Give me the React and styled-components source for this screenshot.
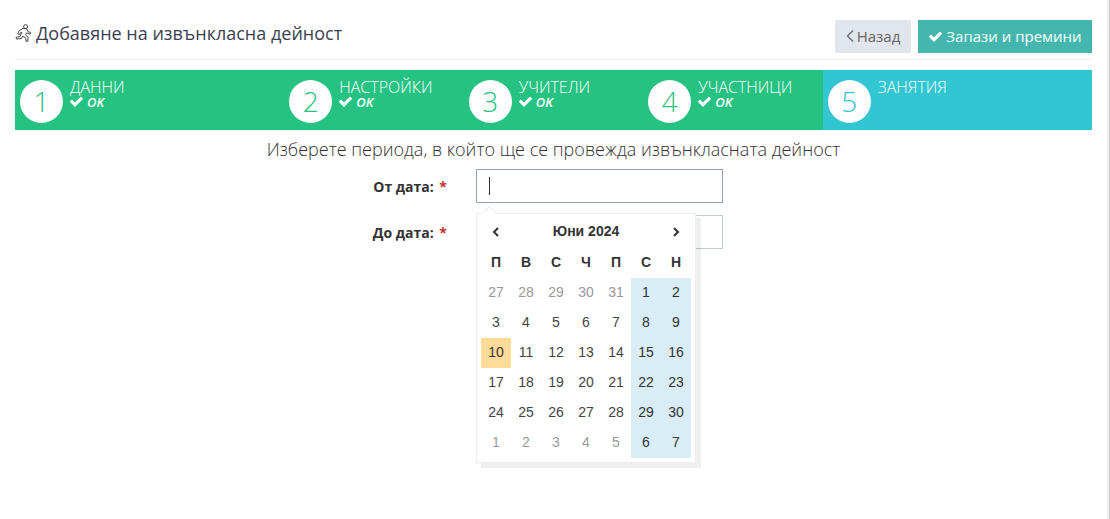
import React from "react";
import styled, { createGlobalStyle } from "styled-components";

const GlobalStyle = createGlobalStyle`
  html, body {
    margin: 0;
    padding: 0;
    background: #fff;
    font-family: "Open Sans", sans-serif;
    overflow: hidden;
  }
`;

const steps = [
  { num: 1, title: "ДАННИ", done: true, width: "25%" },
  { num: 2, title: "НАСТРОЙКИ", done: true, width: "16.6667%" },
  { num: 3, title: "УЧИТЕЛИ", done: true, width: "16.6667%" },
  { num: 4, title: "УЧАСТНИЦИ", done: true, width: "16.6667%" },
  { num: 5, title: "ЗАНЯТИЯ", done: false, width: "25%" },
];

const weekDays = ["П", "В", "С", "Ч", "П", "С", "Н"];

const days = [
  [27, 28, 29, 30, 31, 1, 2],
  [3, 4, 5, 6, 7, 8, 9],
  [10, 11, 12, 13, 14, 15, 16],
  [17, 18, 19, 20, 21, 22, 23],
  [24, 25, 26, 27, 28, 29, 30],
  [1, 2, 3, 4, 5, 6, 7],
];

const Check = ({ size = 13 }) => (
  <svg width={size} height={size} viewBox="0 0 1792 1792" fill="currentColor">
    <path d="M1671 566q0 40-28 68l-724 724-136 136q-28 28-68 28t-68-28l-136-136-362-362q-28-28-28-68t28-68l136-136q28-28 68-28t68 28l294 295 656-657q28-28 68-28t68 28l136 136q28 28 28 68z" />
  </svg>
);

const Runner = () => (
  <svg width="17" height="18" viewBox="0 0 17 18" fill="none" stroke="#4a4a4a" strokeWidth="1" strokeLinejoin="round" strokeLinecap="round">
    <circle cx="10.6" cy="2.6" r="2" />
    <path d="M4.5 6.5l3.2-2 4 .3 1.2 2.8 2.8 1-.6 1.6-3.6-1.3-1.1 2 2.7 2.2-.3 4.2h-1.8l-.3-3.2-3-2-1.3 2.5-5 .4-.3-1.7 3.8-.6 2-4.5-1.5.5-1 1.8-1.4-.7z" />
  </svg>
);

const Chevron = ({ dir }) => (
  <svg width="8" height="10" viewBox="0 0 8 10" fill="none" stroke="#333" strokeWidth="2">
    <path d={dir === "left" ? "M6 1L2 5l4 4" : "M2 1l4 4-4 4"} />
  </svg>
);

export default function App() {
  return (
    <Page>
      <GlobalStyle />
      <Header>
        <Title>
          <Runner />
          Добавяне на извънкласна дейност
        </Title>
        <Actions>
          <BackButton>
            <svg width="8" height="14" viewBox="0 0 8 14" fill="none" stroke="#6b6f7c" strokeWidth="1.4">
              <path d="M7 1.5L1.5 7 7 12.5" />
            </svg>
            Назад
          </BackButton>
          <SaveButton>
            <Check size={15} />
            Запази и премини
          </SaveButton>
        </Actions>
      </Header>

      <Wizard>
        {steps.map((s) => (
          <Step key={s.num} $done={s.done} $width={s.width}>
            <Circle $done={s.done}>{s.num}</Circle>
            <StepText>
              <StepTitle>{s.title}</StepTitle>
              {s.done && (
                <StepStatus>
                  <Check size={15} />
                  <em>OK</em>
                </StepStatus>
              )}
            </StepText>
          </Step>
        ))}
      </Wizard>

      <Lead>Изберете периода, в който ще се провежда извънкласната дейност</Lead>

      <Form>
        <FieldRow>
          <Label>
            От дата: <Req>*</Req>
          </Label>
          <DateInputWrap>
            <DateInput $focused>
              <Caret />
            </DateInput>
            <Picker>
              <Arrow />
              <PickerHead>
                <NavBtn>
                  <Chevron dir="left" />
                </NavBtn>
                <Month>Юни 2024</Month>
                <NavBtn>
                  <Chevron dir="right" />
                </NavBtn>
              </PickerHead>
              <DayGrid>
                {weekDays.map((d, i) => (
                  <WeekDay key={i}>{d}</WeekDay>
                ))}
                {days.flatMap((week, w) =>
                  week.map((d, i) => {
                    const outside = (w === 0 && i < 5) || (w === 5 && i < 5);
                    return (
                      <Day key={w + "-" + i} $weekend={i > 4} $outside={outside} $today={w === 2 && i === 0}>
                        {d}
                      </Day>
                    );
                  })
                )}
              </DayGrid>
            </Picker>
          </DateInputWrap>
        </FieldRow>
        <FieldRow>
          <Label>
            До дата: <Req>*</Req>
          </Label>
          <DateInput />
        </FieldRow>
      </Form>
      <Scroll />
    </Page>
  );
}

const Page = styled.div`
  height: 519px;
  padding: 20px 18px 0 15px;
  box-sizing: border-box;
  color: #333;
`;

const Header = styled.div`
  display: flex;
  justify-content: space-between;
  align-items: flex-start;
  height: 39px;
  border-bottom: 1px solid #eee;
`;

const Title = styled.h1`
  display: flex;
  align-items: center;
  gap: 4px;
  margin: 2px 0 0;
  font-size: 18px;
  font-weight: 400;
  line-height: 22px;
  color: #3a3f51;
`;

const Actions = styled.div`
  display: flex;
  gap: 7px;
`;

const BackButton = styled.button`
  display: flex;
  align-items: center;
  justify-content: center;
  gap: 3px;
  width: 76px;
  height: 33px;
  padding: 0 0 1px;
  border: 0;
  background: #e1e5ec;
  color: #666;
  font: 400 15px "Open Sans", sans-serif;
`;

const SaveButton = styled.button`
  display: flex;
  align-items: center;
  justify-content: center;
  gap: 3px;
  width: 174px;
  height: 33px;
  padding: 0 0 1px;
  border: 0;
  background: #44b6ae;
  color: #fff;
  font: 400 15px "Open Sans", sans-serif;
`;

const Wizard = styled.div`
  display: flex;
  margin-top: 10px;
  height: 60px;
`;

const Step = styled.div`
  display: flex;
  box-sizing: border-box;
  width: ${(p) => p.$width};
  padding: 10px 5px;
  gap: 7px;
  background: ${(p) => (p.$done ? "#26c281" : "#32c5d2")};
  color: #fff;
`;

const Circle = styled.div`
  display: flex;
  align-items: center;
  justify-content: center;
  box-sizing: border-box;
  flex: none;
  width: 43px;
  height: 43px;
  padding-bottom: 2px;
  border-radius: 50%;
  background: #fff;
  color: ${(p) => (p.$done ? "#26c281" : "#32c5d2")};
  font-size: 28px;
  font-weight: 300;
`;

const StepText = styled.div`
  display: flex;
  flex-direction: column;
`;

const StepTitle = styled.div`
  font-size: 16px;
  font-weight: 300;
  line-height: 16px;
  margin-top: -2px;
  padding-top: 1px;
`;

const StepStatus = styled.div`
  display: flex;
  align-items: center;
  gap: 3px;
  margin: -1px 0 0 -1px;
  font-size: 13px;
  font-weight: 600;
  line-height: 14px;
`;

const Lead = styled.div`
  margin-top: 7px;
  text-align: center;
  font-size: 18px;
  font-weight: 300;
  line-height: 24px;
  color: #333;
`;

const Form = styled.div`
  display: flex;
  flex-direction: column;
  gap: 12px;
  margin-top: 8px;
`;

const FieldRow = styled.div`
  display: flex;
  align-items: center;
  height: 34px;
`;

const Label = styled.label`
  box-sizing: border-box;
  width: 461px;
  padding: 1px 29px 0 0;
  text-align: right;
  font-size: 14px;
  font-weight: 700;
`;

const Req = styled.span`
  color: #c9302c;
  margin-left: 2px;
`;

const DateInputWrap = styled.div`
  position: relative;
`;

const DateInput = styled.div`
  box-sizing: border-box;
  display: flex;
  align-items: center;
  width: 247px;
  height: 34px;
  padding-left: 12px;
  background: #fff;
  border: 1px solid ${(p) => (p.$focused ? "#93a1bb" : "#c2cad8")};
`;

const Caret = styled.span`
  display: block;
  width: 1px;
  height: 18px;
  background: #333;
`;

const Picker = styled.div`
  position: absolute;
  z-index: 2;
  top: 44px;
  left: 0;
  box-sizing: border-box;
  width: 220px;
  height: 250px;
  padding: 4px;
  background: #fff;
  border: 1px solid #eee;
  box-shadow: 5px 5px rgba(102, 102, 102, 0.1);
  font-family: "Liberation Sans", Arial, sans-serif;
  font-size: 14px;
`;

const Arrow = styled.span`
  position: absolute;
  top: -7px;
  left: 6px;
  width: 12px;
  height: 12px;
  background: #fff;
  border-left: 1px solid #e6e6e6;
  border-top: 1px solid #e6e6e6;
  transform: rotate(45deg) scale(0.8);
`;

const PickerHead = styled.div`
  display: grid;
  grid-template-columns: 30px 1fr 30px;
  align-items: center;
  height: 30px;
  padding-bottom: 4px;
  box-sizing: border-box;
`;

const NavBtn = styled.span`
  display: flex;
  align-items: center;
  justify-content: center;
  padding-top: 1px;
`;

const Month = styled.div`
  text-align: center;
  font-weight: 700;
  font-size: 14px;
`;

const DayGrid = styled.div`
  display: grid;
  grid-template-columns: repeat(7, 30px);
`;

const WeekDay = styled.div`
  display: flex;
  align-items: center;
  justify-content: center;
  box-sizing: border-box;
  height: 30px;
  padding-bottom: 3px;
  font-weight: 700;
  font-size: 14px;
`;

const Day = styled.div`
  display: flex;
  align-items: center;
  justify-content: center;
  box-sizing: border-box;
  height: 30px;
  padding-bottom: 2px;
  background: ${(p) => (p.$today ? "#ffdb99" : p.$weekend ? "#d9edf7" : "transparent")};
  color: ${(p) => (p.$outside && !p.$weekend ? "#999" : p.$weekend || p.$today ? "#333" : "#444")};
`;

const Scroll = styled.div`
  position: fixed;
  top: 0;
  right: 0;
  bottom: 0;
  width: 2px;
  background: #f1f1f1;
  border-right: 1px solid #c8c8c8;
`;
